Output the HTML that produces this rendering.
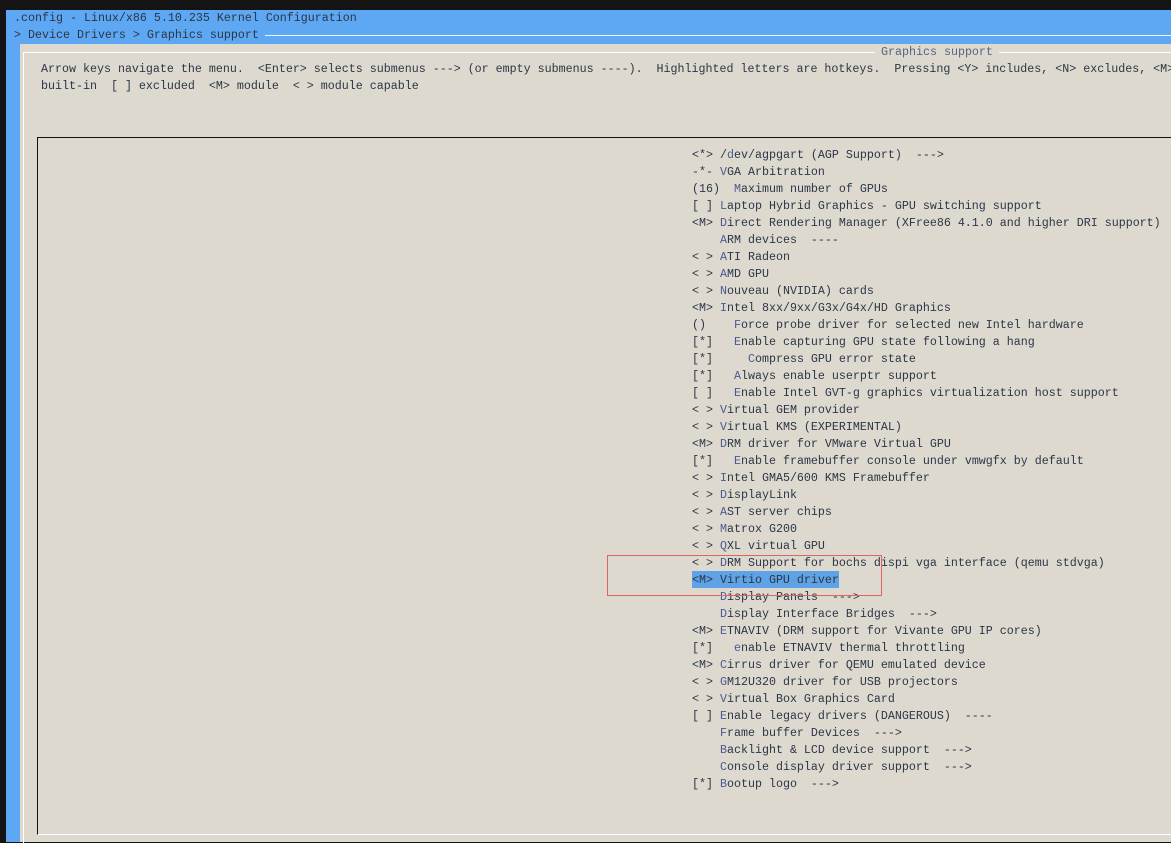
<!DOCTYPE html>
<html><head><meta charset="utf-8"><style>
body{margin:0;width:1171px;height:842px;overflow:hidden;background:#141414;position:relative;font-family:"Liberation Mono",monospace;font-size:11.67px;color:#333}
.blue{position:absolute;left:6px;top:10px;width:1165px;height:832px;background:#5ea7f2}
.t{position:absolute;white-space:pre;line-height:17px;color:#2b3646}
.dlg{position:absolute;left:20px;top:44px;width:1151px;height:798px;background:#ddd9cf}
.ib{position:absolute;left:23px;top:52px;width:1148px;height:790px;border-left:1px solid #fff;border-top:1px solid #fff}
.box{position:absolute;left:37px;top:137px;width:1134px;height:696px;border-left:1.5px solid #111;border-top:1.5px solid #111;border-bottom:1.5px solid #fff}
pre{margin:0;font:inherit}
.h{color:#4a5a92}
.sel{background:#5fa2e6}
</style></head><body>
<div class="blue"></div>
<div class="t" style="left:14px;top:10px">.config - Linux/x86 5.10.235 Kernel Configuration</div>
<div class="t" style="left:14px;top:27px">&gt; Device Drivers &gt; Graphics support</div>
<div style="position:absolute;left:265px;top:35px;width:906px;height:1px;background:#e8f4ff"></div>
<div class="dlg"></div>
<div class="ib"></div>
<div class="t" style="left:875px;top:44px;background:#ddd9cf;color:#556680;padding:0 6px">Graphics support</div>
<div class="t" style="left:41px;top:61px">Arrow keys navigate the menu.  &lt;Enter&gt; selects submenus ---&gt; (or empty submenus ----).  Highlighted letters are hotkeys.  Pressing &lt;Y&gt; includes, &lt;N&gt; excludes, &lt;M&gt;
built-in  [ ] excluded  &lt;M&gt; module  &lt; &gt; module capable</div>
<div class="box"></div>
<div style="position:absolute;left:692px;top:571px;width:147px;height:17px;background:#5fa2e6"></div>
<pre class="t" style="left:692px;top:147px">&lt;*&gt; /<span class="h">d</span>ev/agpgart (AGP Support)  ---&gt;
-*- <span class="h">V</span>GA Arbitration
(16)  <span class="h">M</span>aximum number of GPUs
[ ] <span class="h">L</span>aptop Hybrid Graphics - GPU switching support
&lt;M&gt; <span class="h">D</span>irect Rendering Manager (XFree86 4.1.0 and higher DRI support)
    <span class="h">A</span>RM devices  ----
&lt; &gt; <span class="h">A</span>TI Radeon
&lt; &gt; <span class="h">A</span>MD GPU
&lt; &gt; <span class="h">N</span>ouveau (NVIDIA) cards
&lt;M&gt; <span class="h">I</span>ntel 8xx/9xx/G3x/G4x/HD Graphics
()    <span class="h">F</span>orce probe driver for selected new Intel hardware
[*]   <span class="h">E</span>nable capturing GPU state following a hang
[*]     <span class="h">C</span>ompress GPU error state
[*]   <span class="h">A</span>lways enable userptr support
[ ]   <span class="h">E</span>nable Intel GVT-g graphics virtualization host support
&lt; &gt; <span class="h">V</span>irtual GEM provider
&lt; &gt; <span class="h">V</span>irtual KMS (EXPERIMENTAL)
&lt;M&gt; <span class="h">D</span>RM driver for VMware Virtual GPU
[*]   <span class="h">E</span>nable framebuffer console under vmwgfx by default
&lt; &gt; <span class="h">I</span>ntel GMA5/600 KMS Framebuffer
&lt; &gt; <span class="h">D</span>isplayLink
&lt; &gt; <span class="h">A</span>ST server chips
&lt; &gt; <span class="h">M</span>atrox G200
&lt; &gt; <span class="h">Q</span>XL virtual GPU
&lt; &gt; <span class="h">D</span>RM Support for bochs dispi vga interface (qemu stdvga)
&lt;M&gt; Virtio GPU driver
    <span class="h">D</span>isplay Panels  ---&gt;
    <span class="h">D</span>isplay Interface Bridges  ---&gt;
&lt;M&gt; <span class="h">E</span>TNAVIV (DRM support for Vivante GPU IP cores)
[*]   <span class="h">e</span>nable ETNAVIV thermal throttling
&lt;M&gt; <span class="h">C</span>irrus driver for QEMU emulated device
&lt; &gt; <span class="h">G</span>M12U320 driver for USB projectors
&lt; &gt; <span class="h">V</span>irtual Box Graphics Card
[ ] <span class="h">E</span>nable legacy drivers (DANGEROUS)  ----
    <span class="h">F</span>rame buffer Devices  ---&gt;
    <span class="h">B</span>acklight &amp; LCD device support  ---&gt;
    <span class="h">C</span>onsole display driver support  ---&gt;
[*] <span class="h">B</span>ootup logo  ---&gt;</pre>
<div style="position:absolute;left:607px;top:555px;width:273px;height:39px;border:1.5px solid #e06262"></div>
</body></html>
